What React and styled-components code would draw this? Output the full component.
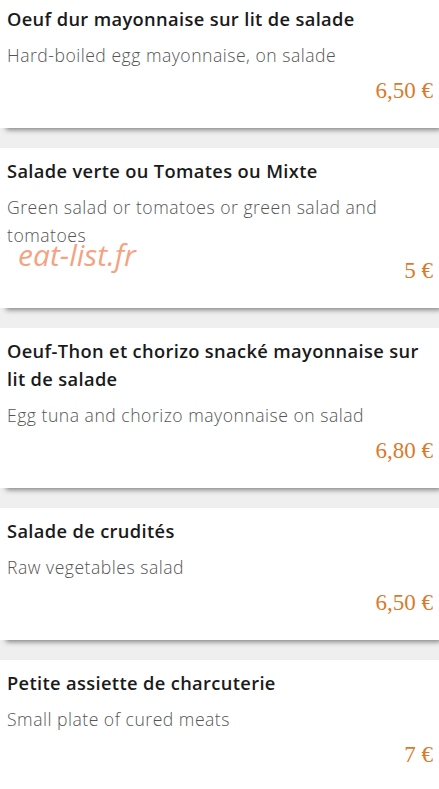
import React from "react";
import styled, { createGlobalStyle } from "styled-components";

const Global = createGlobalStyle`
  html, body { margin: 0; padding: 0; background: #efefef; }
  body { font-family: "Open Sans", sans-serif; overflow: hidden; }
`;

const List = styled.div`
  display: flex;
  flex-direction: column;
  gap: 20px;
  margin-top: -4px;
  min-height: calc(100vh + 4px);
`;

const Card = styled.div`
  position: relative;
  background: #ffffff;
  padding: 9px 6px 23px 7px;
  box-shadow: 4px 4px 5px -2px rgba(0, 0, 0, 0.45);
  &:last-child { flex: 1; box-shadow: none; }
`;

const Title = styled.h3`
  margin: 0;
  font-family: "Open Sans", sans-serif;
  font-weight: 600;
  font-size: 18.3px;
  letter-spacing: 0.35px;
  line-height: 28px;
  color: #1a1a1a;
`;

const Desc = styled.p`
  margin: 8px 0 0;
  font-family: "Open Sans", sans-serif;
  font-weight: 300;
  font-size: 17.6px;
  letter-spacing: 0.5px;
  line-height: 28px;
  color: #555;
`;

const Price = styled.div`
  margin-top: 8px;
  text-align: right;
  font-family: "Liberation Serif", "DejaVu Serif", serif;
  font-size: 23px;
  line-height: 28px;
  color: #d97a2c;
`;

const Watermark = styled.span`
  position: absolute;
  left: 18px;
  top: 86px;
  font-family: "Open Sans", sans-serif;
  font-style: italic;
  font-size: 30px;
  color: rgba(242, 145, 105, 0.85);
  pointer-events: none;
`;

const items = [
  { t: "Oeuf dur mayonnaise sur lit de salade", d: "Hard-boiled egg mayonnaise, on salade", p: "6,50 €" },
  { t: "Salade verte ou Tomates ou Mixte", d: "Green salad or tomatoes or green salad and tomatoes", p: "5 €", wm: true },
  { t: "Oeuf-Thon et chorizo snacké mayonnaise sur lit de salade", d: "Egg tuna and chorizo mayonnaise on salad", p: "6,80 €" },
  { t: "Salade de crudités", d: "Raw vegetables salad", p: "6,50 €" },
  { t: "Petite assiette de charcuterie", d: "Small plate of cured meats", p: "7 €" },
];

export default function App() {
  return (
    <>
      <Global />
      <List>
        {items.map((it, i) => (
          <Card key={i}>
            <Title>{it.t}</Title>
            <Desc>{it.d}</Desc>
            <Price>{it.p}</Price>
            {it.wm && <Watermark>eat-list.fr</Watermark>}
          </Card>
        ))}
      </List>
    </>
  );
}
